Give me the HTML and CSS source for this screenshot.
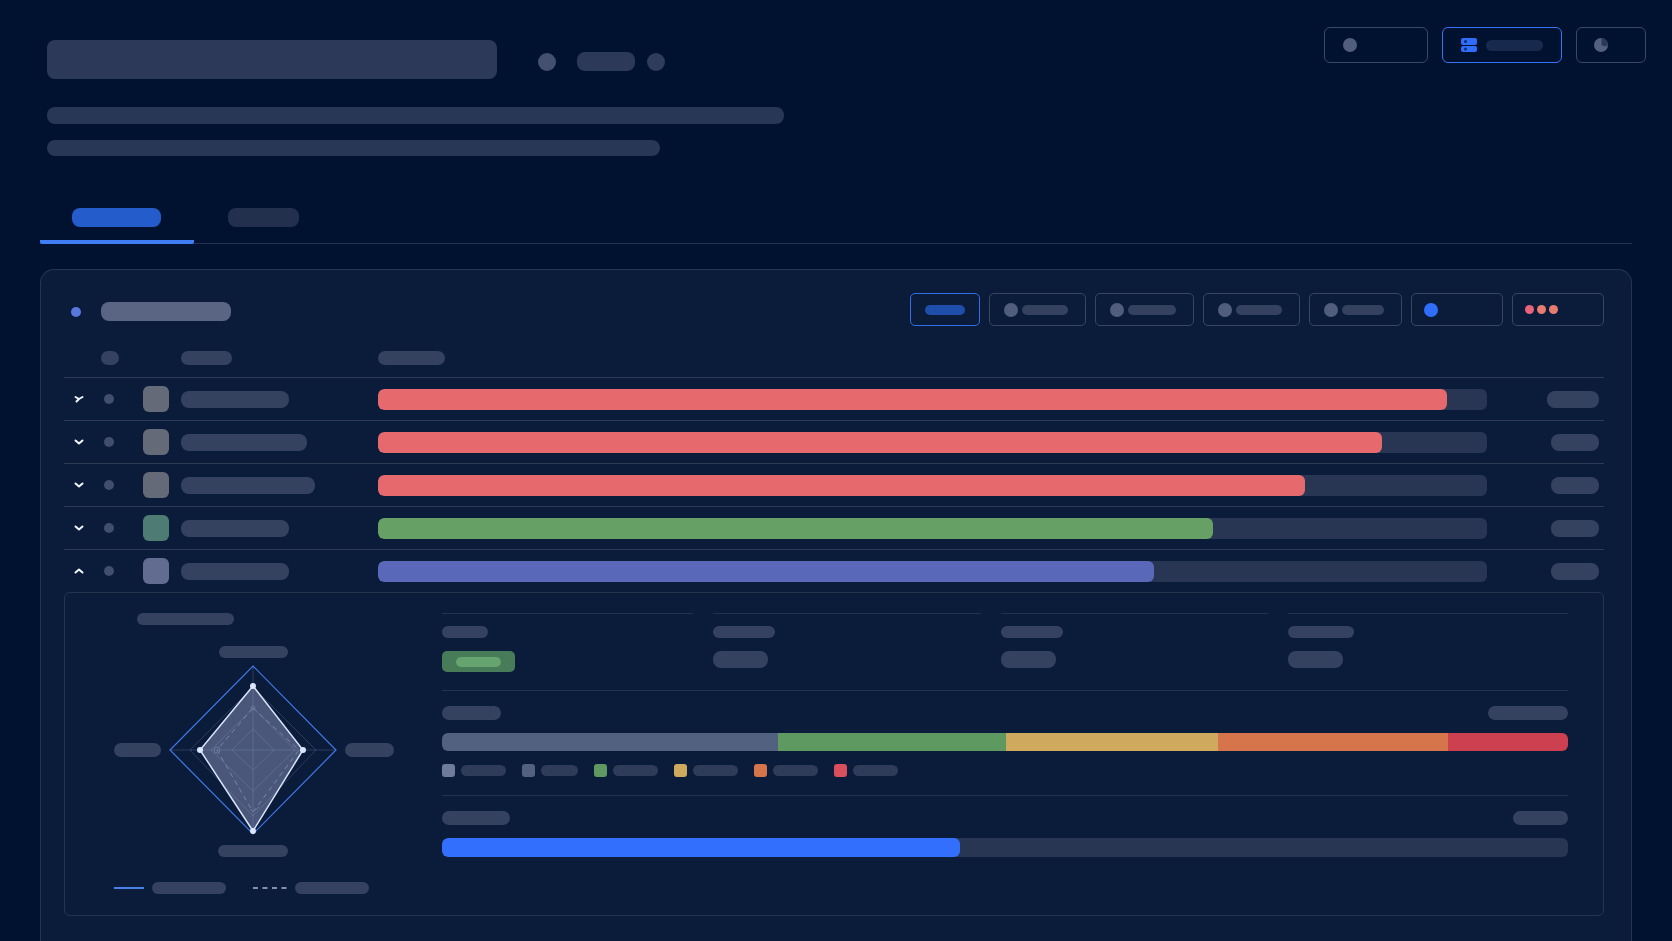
FILE: index.html
```html
<!DOCTYPE html>
<html lang="en">
<head>
    <meta charset="UTF-8">
    <meta name="viewport" content="width=device-width, initial-scale=1.0">
    <title>Dashboard</title>
    <link rel="stylesheet" href="styles.css">
</head>
<body>
    <!-- Header -->
    <header class="header">
        <div class="header-text">
            <div class="title-row">
                <h1 class="bone title-bone"></h1>
                <div class="title-meta">
                    <span class="dot dot-large dot-bright"></span>
                    <span class="bone meta-bone"></span>
                    <span class="dot dot-large"></span>
                </div>
            </div>
            <div class="bone intro-line"></div>
            <div class="bone intro-line intro-line-short"></div>
        </div>
        <div class="header-actions">
            <button class="action action-wide" aria-label="Status"><span class="dot dot-icon"></span></button>
            <button class="action action-primary" aria-label="Servers">
                <svg class="server-icon" width="16" height="16" viewBox="0 0 16 16">
                    <rect x="0" y="1" width="16" height="7" rx="2"/>
                    <rect x="0" y="9" width="16" height="6" rx="2"/>
                    <circle cx="4.5" cy="4.5" r="1.5"/>
                    <circle cx="4.5" cy="12" r="1.5"/>
                </svg>
                <span class="bone action-bone"></span>
            </button>
            <button class="action action-small" aria-label="Usage">
                <svg width="14" height="14" viewBox="0 0 14 14">
                    <circle cx="7" cy="7" r="7" fill="#536080"/>
                    <path d="M7.5 0A7 7 0 0 1 14 7L11 8.500L7.5 7Z" fill="#2c3957"/>
                </svg>
            </button>
        </div>
    </header>

    <!-- Tabs -->
    <nav class="tabs">
        <button class="tab active" aria-label="Overview"><span class="bone w-89"></span></button>
        <button class="tab" aria-label="Details"><span class="bone w-71"></span></button>
    </nav>

    <!-- Main panel -->
    <main class="panel">
        <div class="toolbar">
            <h2 class="panel-title"><span class="dot dot-blue"></span><span class="bone panel-title-bone"></span></h2>
            <div class="filters">
                <button class="filter active" aria-label="All"><span class="bone w-40"></span></button>
                <button class="filter" aria-label="Filter 1"><span class="dot dot-icon"></span><span class="bone w-46"></span></button>
                <button class="filter" aria-label="Filter 2"><span class="dot dot-icon"></span><span class="bone w-48"></span></button>
                <button class="filter" aria-label="Filter 3"><span class="dot dot-icon"></span><span class="bone w-46"></span></button>
                <button class="filter" aria-label="Filter 4"><span class="dot dot-icon"></span><span class="bone w-42"></span></button>
                <button class="filter filter-wide" aria-label="Highlight"><span class="dot dot-icon dot-accent"></span></button>
                <button class="filter filter-wide filter-more" aria-label="More">
                    <span class="dot dot-more dot-rose"></span><span class="dot dot-more"></span><span class="dot dot-more"></span>
                </button>
            </div>
        </div>

        <table class="ranking">
            <colgroup>
                <col class="col-toggle">
                <col class="col-rank">
                <col class="col-icon">
                <col class="col-name">
                <col>
                <col class="col-value">
            </colgroup>
            <thead>
                <tr>
                    <th></th>
                    <th><span class="bone w-18"></span></th>
                    <th></th>
                    <th><span class="bone w-51"></span></th>
                    <th><span class="bone w-67"></span></th>
                    <th></th>
                </tr>
            </thead>
            <tbody>
                <tr>
                    <td><button class="toggle" aria-label="Expand row"><svg width="10" height="8" viewBox="0 0 10 8"><path d="M1.500 2L5 4L8.500 2M5 4L2.500 6.500"/></svg></button></td>
                    <td><span class="dot dot-rank"></span></td>
                    <td><span class="icon"></span></td>
                    <td><span class="bone w-108"></span></td>
                    <td><div class="track"><div class="fill red" style="width: 96.4%"></div></div></td>
                    <td><span class="bone value w-52"></span></td>
                </tr>
                <tr>
                    <td><button class="toggle" aria-label="Expand row"><svg width="10" height="8" viewBox="0 0 10 8"><path d="M1.500 2.500L5 5.500L8.500 2.500"/></svg></button></td>
                    <td><span class="dot dot-rank"></span></td>
                    <td><span class="icon"></span></td>
                    <td><span class="bone w-126"></span></td>
                    <td><div class="track"><div class="fill red" style="width: 90.5%"></div></div></td>
                    <td><span class="bone value w-48"></span></td>
                </tr>
                <tr>
                    <td><button class="toggle" aria-label="Expand row"><svg width="10" height="8" viewBox="0 0 10 8"><path d="M1.500 2.500L5 5.500L8.500 2.500"/></svg></button></td>
                    <td><span class="dot dot-rank"></span></td>
                    <td><span class="icon"></span></td>
                    <td><span class="bone w-134"></span></td>
                    <td><div class="track"><div class="fill red" style="width: 83.6%"></div></div></td>
                    <td><span class="bone value w-48"></span></td>
                </tr>
                <tr>
                    <td><button class="toggle" aria-label="Expand row"><svg width="10" height="8" viewBox="0 0 10 8"><path d="M1.500 2.500L5 5.500L8.500 2.500"/></svg></button></td>
                    <td><span class="dot dot-rank"></span></td>
                    <td><span class="icon icon-green"></span></td>
                    <td><span class="bone w-108"></span></td>
                    <td><div class="track"><div class="fill green" style="width: 75.3%"></div></div></td>
                    <td><span class="bone value w-48"></span></td>
                </tr>
                <tr class="expanded">
                    <td><button class="toggle" aria-label="Collapse row" aria-expanded="true"><svg width="10" height="8" viewBox="0 0 10 8"><path d="M1.500 5.500L5 2.500L8.500 5.500"/></svg></button></td>
                    <td><span class="dot dot-rank"></span></td>
                    <td><span class="icon icon-slate"></span></td>
                    <td><span class="bone w-108"></span></td>
                    <td><div class="track"><div class="fill indigo" style="width: 70%"></div></div></td>
                    <td><span class="bone value w-48"></span></td>
                </tr>
                <tr class="detail-row">
                    <td colspan="6">
                        <div class="detail">
                            <!-- Radar chart -->
                            <div class="profile">
                                <h3 class="bone profile-title"></h3>
                                <div class="radar">
                                    <span class="bone radar-top"></span>
                                    <span class="bone radar-left"></span>
                                    <svg class="radar-chart" width="170" height="170" viewBox="0 0 170 170">
                                        <path class="radar-outer" d="M85 1L168 85L85 169L2 85Z"/>
                                        <path class="radar-area" d="M85 21L135 85L85 166L32 85Z"/>
                                        <g class="radar-grid">
                                            <path d="M85 22L148 85L85 151L22 85Z"/>
                                            <path d="M85 43L127 85L85 126L43 85Z"/>
                                            <path d="M85 64L106 85L85 105L64 85Z"/>
                                            <path d="M85 2V168M3 85H167"/>
                                        </g>
                                        <path class="radar-average" d="M85 43L131 85L85 147L49 85Z"/>
                                        <g class="radar-rings">
                                            <circle cx="85" cy="43" r="2"/>
                                            <circle cx="49" cy="85" r="3"/>
                                            <path d="M82 144L85 147L91 142"/>
                                        </g>
                                        <path class="radar-line" d="M85 21L135 85L85 166L32 85Z"/>
                                        <g class="radar-points">
                                            <circle cx="85" cy="21" r="3"/>
                                            <circle cx="135" cy="85" r="3"/>
                                            <circle cx="85" cy="166" r="3"/>
                                            <circle cx="32" cy="85" r="3"/>
                                        </g>
                                    </svg>
                                    <span class="bone radar-right"></span>
                                    <span class="bone radar-bottom"></span>
                                </div>
                                <div class="radar-legend">
                                    <svg width="30" height="2" viewBox="0 0 30 2"><path d="M0 1H30" stroke="#4b80ea" stroke-width="2"/></svg>
                                    <span class="bone w-74"></span>
                                    <svg class="legend-dashed" width="34" height="2" viewBox="0 0 34 2"><path d="M0 1H34" stroke="#8490ac" stroke-width="2" stroke-dasharray="5 4.500"/></svg>
                                    <span class="bone w-74"></span>
                                </div>
                            </div>

                            <!-- Metrics -->
                            <div class="metrics">
                                <div class="stats">
                                    <div class="stat"><span class="bone w-46"></span><span class="badge"><span class="bone"></span></span></div>
                                    <div class="stat"><span class="bone w-62"></span><span class="bone stat-value"></span></div>
                                    <div class="stat"><span class="bone w-62"></span><span class="bone stat-value"></span></div>
                                    <div class="stat"><span class="bone w-66"></span><span class="bone stat-value"></span></div>
                                </div>

                                <section class="metric">
                                    <div class="metric-head"><span class="bone w-59"></span><span class="bone w-80"></span></div>
                                    <div class="stack">
                                        <div class="grey" style="width: 29.8%"></div>
                                        <div class="leaf" style="width: 20.3%"></div>
                                        <div class="yellow" style="width: 18.8%"></div>
                                        <div class="orange" style="width: 20.4%"></div>
                                        <div class="crimson" style="width: 10.7%"></div>
                                    </div>
                                    <ul class="legend">
                                        <li><span class="swatch silver"></span><span class="bone w-45"></span></li>
                                        <li><span class="swatch grey"></span><span class="bone w-37"></span></li>
                                        <li><span class="swatch leaf"></span><span class="bone w-45"></span></li>
                                        <li><span class="swatch yellow"></span><span class="bone w-45"></span></li>
                                        <li><span class="swatch orange"></span><span class="bone w-45"></span></li>
                                        <li><span class="swatch rose"></span><span class="bone w-45"></span></li>
                                    </ul>
                                </section>

                                <section class="metric">
                                    <div class="metric-head"><span class="bone w-68"></span><span class="bone w-55"></span></div>
                                    <div class="track track-progress"><div class="fill blue" style="width: 46%"></div></div>
                                </section>
                            </div>
                        </div>
                    </td>
                </tr>
            </tbody>
        </table>
    </main>

    <script>
        // Show or hide the detail block under the last row
        document.querySelector('.expanded .toggle').addEventListener('click', () => {
            document.querySelector('.detail-row').classList.toggle('hidden');
        });
    </script>
</body>
</html>
```

FILE: styles.css
```css
* {
    margin: 0;
    padding: 0;
    box-sizing: border-box;
}

body {
    font-family: Inter, Arial, sans-serif;
    background-color: #011231;
    min-height: 100vh;
    display: flex;
    flex-direction: column;
    overflow-x: hidden;
}

button {
    background: none;
    border: none;
    cursor: pointer;
    font: inherit;
}

/* Placeholder shapes */
.bone {
    display: block;
    flex-shrink: 0;
    height: 14px;
    border-radius: 8px;
    background-color: #35425f;
}

.dot {
    display: block;
    flex-shrink: 0;
    width: 10px;
    height: 10px;
    border-radius: 50%;
    background-color: #414e6c;
}

.dot-large {
    width: 18px;
    height: 18px;
    background-color: #2f3c5c;
}

.dot-bright {
    background-color: #445070;
    margin-right: 9px;
}

.dot-icon {
    width: 14px;
    height: 14px;
    background-color: #505d7b;
}

.dot-blue {
    background-color: #5878df;
}

.dot-accent {
    background-color: #2f6dfb;
}

.dot-more {
    width: 9px;
    height: 9px;
    background-color: #e67b70;
}

.dot-rose {
    background-color: #e9637a;
}

.w-18 { width: 18px; }
.w-37 { width: 37px; }
.w-40 { width: 40px; }
.w-42 { width: 42px; }
.w-45 { width: 45px; }
.w-46 { width: 46px; }
.w-48 { width: 48px; }
.w-51 { width: 51px; }
.w-52 { width: 52px; }
.w-55 { width: 55px; }
.w-59 { width: 59px; }
.w-62 { width: 62px; }
.w-66 { width: 66px; }
.w-67 { width: 67px; }
.w-68 { width: 68px; }
.w-71 { width: 71px; }
.w-74 { width: 74px; }
.w-80 { width: 80px; }
.w-89 { width: 89px; }
.w-108 { width: 108px; }
.w-126 { width: 126px; }
.w-134 { width: 134px; }

/* Header */
.header {
    display: flex;
    justify-content: space-between;
    align-items: flex-start;
    padding: 27px 26px 0 47px;
}

.header-text {
    padding-top: 13px;
    flex: 1;
}

.title-row {
    display: flex;
    align-items: center;
    gap: 41px;
    margin-bottom: 28px;
}

.title-bone {
    width: 450px;
    height: 39px;
    background-color: #2c3958;
}

.title-meta {
    display: flex;
    align-items: center;
    gap: 12px;
    margin-top: 4px;
}

.meta-bone {
    width: 58px;
    height: 19px;
    background-color: #2c3958;
}

.intro-line {
    width: 737px;
    max-width: 90%;
    height: 17px;
    background-color: #293756;
    margin-bottom: 16px;
}

.intro-line-short {
    width: 613px;
    height: 16px;
    margin-bottom: 0;
}

.header-actions {
    display: flex;
    gap: 14px;
}

.action {
    height: 36px;
    padding: 0 18px;
    display: flex;
    align-items: center;
    gap: 9px;
    border: 1px solid #3a4867;
    border-radius: 6px;
}

.action-wide {
    width: 104px;
}

.action-primary {
    width: 120px;
    border-color: #3575f4;
}

.action-small {
    width: 70px;
    padding: 0 17px;
}

.action-bone {
    width: 57px;
    height: 11px;
    background-color: #172a4e;
}

.server-icon rect {
    fill: #2f6dfb;
}

.server-icon circle {
    fill: #0c2b6c;
}

/* Tabs */
.tabs {
    display: flex;
    gap: 2px;
    margin: 52px 40px 0;
    border-bottom: 1px solid #22314f;
}

.tab {
    padding: 0 33px 13px 32px;
    border-bottom: 4px solid transparent;
    border-radius: 2px;
    margin-bottom: -1px;
}

.tab .bone {
    height: 19px;
    background-color: #22304e;
}

.tab.active {
    border-bottom-color: #3f7df5;
}

.tab.active .bone {
    background-color: #255ccb;
}

/* Panel */
.panel {
    flex: 1;
    margin: 25px 40px 0;
    padding: 23px 27px 24px 23px;
    background-color: #0b1c3b;
    border: 1px solid #25344f;
    border-bottom: none;
    border-radius: 14px 14px 0 0;
}

.toolbar {
    display: flex;
    justify-content: space-between;
    align-items: center;
}

.panel-title {
    display: flex;
    align-items: center;
    gap: 20px;
    padding: 4px 0 0 7px;
}

.panel-title-bone {
    width: 130px;
    height: 19px;
    background-color: #5a6584;
}

.filters {
    display: flex;
    gap: 9px;
}

.filter {
    height: 33px;
    padding: 0 17px 0 14px;
    display: flex;
    align-items: center;
    gap: 4px;
    border: 1px solid #384662;
    border-radius: 5px;
}

.filter .bone {
    height: 10px;
    border-radius: 5px;
}

.filter.active {
    padding: 0 14px;
    border-color: #3070e4;
}

.filter.active .bone {
    background-color: #1f4daa;
}

.filter-wide {
    width: 92px;
    padding: 0 12px;
}

.filter-more {
    padding: 0 12px;
    gap: 3px;
}

/* Ranking table */
.ranking {
    width: 100%;
    table-layout: fixed;
    border-spacing: 0;
}

.col-toggle { width: 37px; }
.col-rank { width: 42px; }
.col-icon { width: 38px; }
.col-name { width: 197px; }
.col-value { width: 117px; }

.ranking th {
    height: 52px;
    padding-top: 12px;
    vertical-align: middle;
    border-bottom: 1px solid #2d3b56;
}

.ranking td {
    height: 43px;
    vertical-align: middle;
    border-bottom: 1px solid #2d3b56;
}

.ranking .expanded td {
    height: 42px;
    border-bottom: none;
}

.ranking .detail-row td {
    border-bottom: none;
}

.ranking td > .bone {
    height: 17px;
}

.ranking td > .value {
    margin: 0 5px 0 auto;
}

.toggle {
    display: block;
    padding: 4px 10px;
}

.toggle svg {
    display: block;
    fill: none;
    stroke: #f2f6ff;
    stroke-width: 2;
    stroke-linecap: round;
    stroke-linejoin: round;
}

.dot-rank {
    margin-left: 3px;
}

.icon {
    display: block;
    width: 26px;
    height: 26px;
    border-radius: 6px;
    background-color: #646a77;
}

.icon-green { background-color: #4f7c72; }
.icon-slate { background-color: #616c90; }

.track {
    height: 21px;
    border-radius: 6px;
    background-color: #293653;
    overflow: hidden;
}

.track-progress {
    height: 19px;
}

.fill {
    height: 100%;
    border-radius: 6px;
}

.red { background-color: #e6696d; }
.green { background-color: #66a065; }
.indigo { background-color: #5968b9; }
.blue { background-color: #336ffd; }
.silver { background-color: #6e7b9b; }
.grey { background-color: #52617f; }
.leaf { background-color: #5d9961; }
.yellow { background-color: #cfa95d; }
.orange { background-color: #d6744b; }
.crimson { background-color: #cd404f; }
.rose { background-color: #d94f5c; }

/* Expanded detail */
.detail-row.hidden {
    display: none;
}

.detail {
    display: grid;
    grid-template-columns: 328px 1fr;
    padding: 20px 35px 21px 49px;
    border: 1px solid #25344f;
    border-radius: 6px;
}

.profile .bone {
    height: 12px;
}

.profile .profile-title {
    width: 97px;
    margin: 0 0 21px 23px;
}

.radar {
    display: grid;
    grid-template-columns: 47px 170px 49px;
    gap: 7px;
    align-items: center;
    justify-items: center;
}

.radar-top {
    grid-column: 2;
    width: 69px;
}

.radar .radar-left {
    grid-column: 1;
    width: 47px;
    height: 14px;
}

.radar .radar-right {
    width: 49px;
    height: 14px;
}

.radar-bottom {
    grid-column: 2;
    width: 70px;
    margin-top: 3px;
}

.radar-chart {
    display: block;
    overflow: visible;
    fill: none;
}

.radar-outer {
    stroke: #4079e6;
    stroke-width: 1.2;
}

.radar-grid {
    stroke: #a0afd2;
    stroke-opacity: 0.22;
}

.radar-area {
    fill: #4a577b;
}

.radar-average {
    stroke: #7986a8;
    stroke-dasharray: 5 4;
}

.radar-rings {
    stroke: #6d7a9d;
}

.radar-line {
    stroke: #d9e4fb;
    stroke-width: 1.5;
}

.radar-points {
    fill: #dce6fc;
}

.radar-legend {
    display: flex;
    align-items: center;
    gap: 8px;
    margin-top: 25px;
}

.legend-dashed {
    margin-left: 19px;
}

.stats {
    display: grid;
    grid-template-columns: 251fr 268fr 267fr 280fr;
    gap: 20px;
    padding-bottom: 18px;
}

.stat {
    border-top: 1px solid #22314f;
    padding-top: 12px;
}

.stat > .bone {
    height: 12px;
    margin-bottom: 13px;
}

.stat > .stat-value {
    width: 55px;
    height: 17px;
    margin-bottom: 0;
}

.badge {
    display: flex;
    align-items: center;
    justify-content: center;
    width: 73px;
    height: 21px;
    border-radius: 5px;
    background-color: #487b58;
}

.badge .bone {
    width: 45px;
    height: 10px;
    background-color: #66a46f;
}

.metric {
    border-top: 1px solid #22314f;
    padding: 15px 0 18px;
}

.metric:last-child {
    padding-bottom: 0;
}

.metric-head {
    display: flex;
    justify-content: space-between;
    margin-bottom: 13px;
}

.stack {
    display: flex;
    height: 18px;
    border-radius: 6px;
    overflow: hidden;
}

.legend {
    display: flex;
    flex-wrap: wrap;
    gap: 16px;
    margin-top: 13px;
    list-style: none;
}

.legend li {
    display: flex;
    align-items: center;
    gap: 6px;
}

.legend .bone {
    height: 11px;
    background-color: #2e3b59;
}

.swatch {
    width: 13px;
    height: 13px;
    border-radius: 3px;
}
```
